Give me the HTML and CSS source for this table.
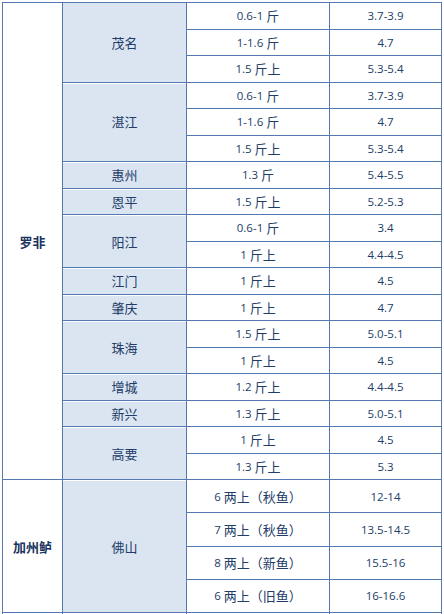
FILE: index.html
```html
<!DOCTYPE html>
<html lang="zh-CN">
<head>
<meta charset="utf-8">
<title>价格表</title>
<link rel="stylesheet" href="styles.css">
</head>
<body>
<div class="grid">
  <div class="c cat s18"><span class="zh">罗非</span></div>

  <div class="c city first s3"><span class="zh">茂名</span></div>
  <div class="c">0.6-1 <span class="zh">斤</span></div><div class="c">3.7-3.9</div>
  <div class="c">1-1.6 <span class="zh">斤</span></div><div class="c">4.7</div>
  <div class="c">1.5 <span class="zh">斤上</span></div><div class="c">5.3-5.4</div>

  <div class="c city s3"><span class="zh">湛江</span></div>
  <div class="c">0.6-1 <span class="zh">斤</span></div><div class="c">3.7-3.9</div>
  <div class="c">1-1.6 <span class="zh">斤</span></div><div class="c">4.7</div>
  <div class="c">1.5 <span class="zh">斤上</span></div><div class="c">5.3-5.4</div>

  <div class="c city"><span class="zh">惠州</span></div>
  <div class="c">1.3 <span class="zh">斤</span></div><div class="c">5.4-5.5</div>

  <div class="c city"><span class="zh">恩平</span></div>
  <div class="c">1.5 <span class="zh">斤上</span></div><div class="c">5.2-5.3</div>

  <div class="c city s2"><span class="zh">阳江</span></div>
  <div class="c">0.6-1 <span class="zh">斤</span></div><div class="c">3.4</div>
  <div class="c">1 <span class="zh">斤上</span></div><div class="c">4.4-4.5</div>

  <div class="c city"><span class="zh">江门</span></div>
  <div class="c">1 <span class="zh">斤上</span></div><div class="c">4.5</div>

  <div class="c city"><span class="zh">肇庆</span></div>
  <div class="c">1 <span class="zh">斤上</span></div><div class="c">4.7</div>

  <div class="c city s2"><span class="zh">珠海</span></div>
  <div class="c">1.5 <span class="zh">斤上</span></div><div class="c">5.0-5.1</div>
  <div class="c">1 <span class="zh">斤上</span></div><div class="c">4.5</div>

  <div class="c city"><span class="zh">增城</span></div>
  <div class="c">1.2 <span class="zh">斤上</span></div><div class="c">4.4-4.5</div>

  <div class="c city"><span class="zh">新兴</span></div>
  <div class="c">1.3 <span class="zh">斤上</span></div><div class="c">5.0-5.1</div>

  <div class="c city s2"><span class="zh">高要</span></div>
  <div class="c">1 <span class="zh">斤上</span></div><div class="c">4.5</div>
  <div class="c">1.3 <span class="zh">斤上</span></div><div class="c">5.3</div>

  <div class="c cat s4"><span class="zh">加州鲈</span></div>
  <div class="c city s4"><span class="zh">佛山</span></div>
  <div class="c">6 <span class="zh">两上（秋鱼）</span></div><div class="c">12-14</div>
  <div class="c">7 <span class="zh">两上（秋鱼）</span></div><div class="c">13.5-14.5</div>
  <div class="c">8 <span class="zh">两上（新鱼）</span></div><div class="c">15.5-16</div>
  <div class="c">6 <span class="zh">两上（旧鱼）</span></div><div class="c">16-16.6</div>

  <div class="c cat"></div>
  <div class="c city"></div>
  <div class="c"></div><div class="c"></div>
</div>
</body>
</html>
```

FILE: styles.css
```css
html, body {
  margin: 0;
  background: #ffffff;
}

body {
  padding: 2px 0 0 2px;
  font-family: "Open Sans", "Noto Sans CJK SC", sans-serif;
  color: #213c68;
  overflow: hidden;
}

.grid {
  display: grid;
  width: max-content;
  grid-template-columns: 60px 124px 143px 112px;
  grid-template-rows: repeat(18, 26.5px) repeat(4, 33.25px) 33px;
  border-top: 1px solid #5479b0;
  border-left: 1px solid #5479b0;
}

.c {
  box-sizing: border-box;
  border-right: 1px solid #5479b0;
  border-bottom: 1px solid #5479b0;
  display: flex;
  align-items: center;
  justify-content: center;
  font-size: 11.5px;
  white-space: pre;
}

.zh {
  font-family: "Noto Sans CJK SC", sans-serif;
  font-size: 13px;
}

.city {
  background: #dbe5f1;
  box-shadow: inset 0 1px 0 #ffffff;
}

.city.first {
  box-shadow: none;
}

.cat {
  font-weight: bold;
}

.cat .zh {
  font-weight: bold;
  color: #1b3360;
}

.s2 { grid-row: span 2; }
.s3 { grid-row: span 3; }
.s4 { grid-row: span 4; }
.s18 { grid-row: span 18; }
```
